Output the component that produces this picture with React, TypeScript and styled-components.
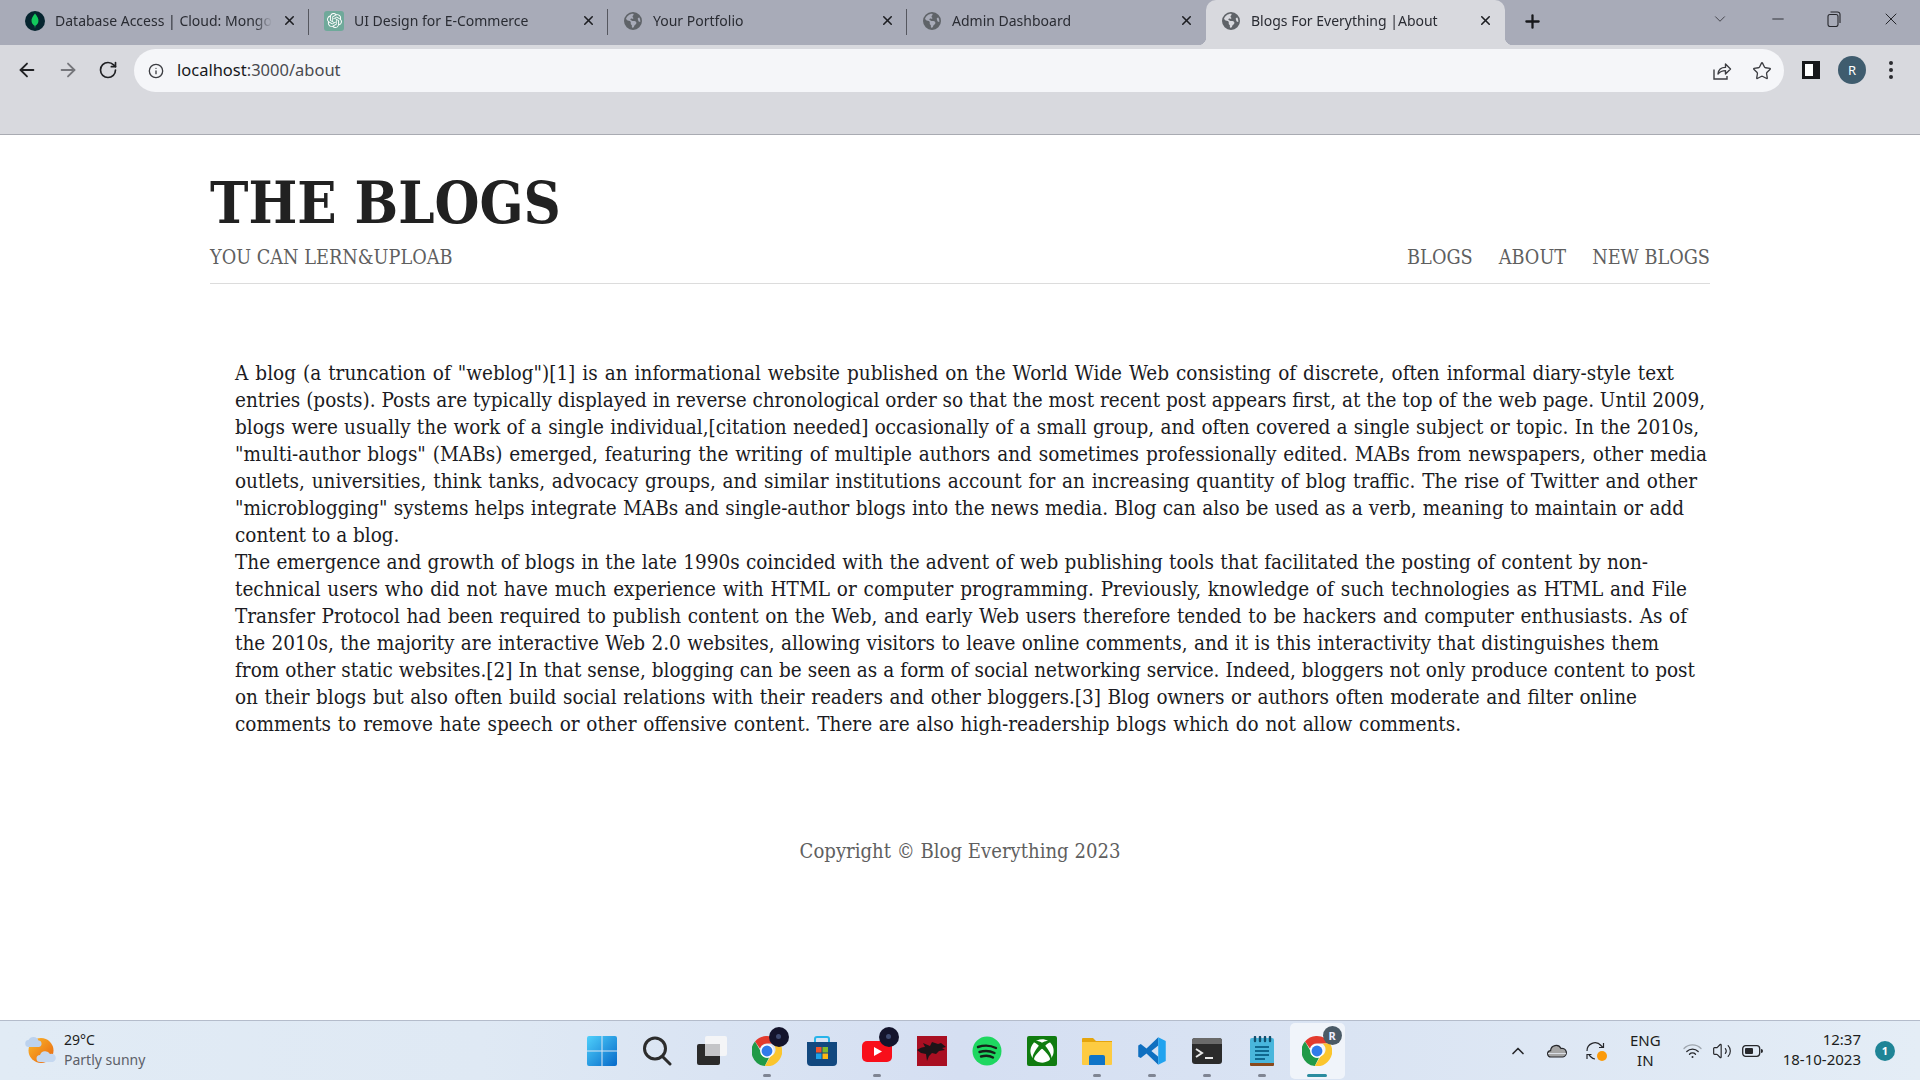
import React from 'react';
import styled, { createGlobalStyle } from 'styled-components';
import {
  ArrowLeft,
  ArrowRight,
  ChevronDown,
  ChevronUp,
  Info,
  Minus,
  Plus,
  RotateCw,
  Star,
  Volume2,
  X
} from 'lucide-react';
import { FaEarthAmericas, FaXbox } from 'react-icons/fa6';
import { SiOpenai } from 'react-icons/si';

const UI_FONT = '"Noto Sans", "Open Sans", sans-serif';
const PAGE_FONT = '"DejaVu Serif Condensed", "DejaVu Serif", serif';

const GlobalStyle = createGlobalStyle`
  html, body {
    margin: 0;
    height: 100%;
    overflow: hidden;
    background: #fff;
  }
`;

const Screen = styled.div`
  display: flex;
  flex-direction: column;
  height: 1080px;
  font-family: ${UI_FONT};
`;

/* Browser chrome */
const TabStrip = styled.div`
  display: flex;
  align-items: stretch;
  height: 45px;
  padding-left: 10px;
  background: #a8abb8;
`;

const Tab = styled.div<{ $active?: boolean; $divider?: boolean }>`
  position: relative;
  display: flex;
  align-items: center;
  gap: 10px;
  box-sizing: border-box;
  width: 299px;
  padding: 0 12px 4px 15px;
  border-radius: 10px 10px 0 0;
  background: ${(p) => (p.$active ? '#d8d9de' : 'transparent')};
  color: #2a2c33;
  font-size: 14px;
  &::after {
    content: '';
    display: ${(p) => (p.$divider ? 'block' : 'none')};
    position: absolute;
    right: 0;
    top: 9px;
    height: 26px;
    width: 1px;
    background: #55575f;
  }
`;

// Concave corners either side of the selected tab
const TabFlare = styled.span<{ $side: 'left' | 'right' }>`
  position: absolute;
  bottom: 0;
  ${(p) => p.$side}: -8px;
  width: 8px;
  height: 8px;
  background: radial-gradient(
    circle at ${(p) => (p.$side === 'left' ? '0 0' : '100% 0')},
    transparent 8px,
    #d8d9de 8.5px
  );
`;

const TabIcon = styled.span`
  display: flex;
  flex: none;
  align-items: center;
  justify-content: center;
  width: 20px;
  height: 20px;
  color: #5f6368;
`;

const OpenAiTile = styled.span`
  display: flex;
  align-items: center;
  justify-content: center;
  width: 20px;
  height: 20px;
  border-radius: 3px;
  background: #6fa99a;
  color: #fff;
`;

const TabTitle = styled.span`
  flex: 1;
  overflow: hidden;
  white-space: nowrap;
  -webkit-mask-image: linear-gradient(90deg, #000 92%, transparent);
  mask-image: linear-gradient(90deg, #000 92%, transparent);
`;

const TabClose = styled(X)`
  flex: none;
  color: #1d1e22;
`;

const NewTab = styled.div`
  display: flex;
  align-items: center;
  padding: 0 0 3px 17px;
  color: #17181b;
`;

const WindowButtons = styled.div`
  display: flex;
  align-items: center;
  gap: 40px;
  margin-left: auto;
  padding: 0 19px 7px 0;
  color: #25262b;
`;

const Toolbar = styled.div`
  display: flex;
  align-items: flex-start;
  box-sizing: border-box;
  height: 90px;
  padding-top: 4px;
  background: #d8d9de;
  border-bottom: 1px solid #a9abb2;
`;

const NavButtons = styled.div`
  display: flex;
  align-items: center;
  gap: 19px;
  height: 42px;
  padding: 0 16px 0 16px;
  color: #1f2023;
`;

const AddressBar = styled.div`
  display: flex;
  align-items: center;
  gap: 13px;
  box-sizing: border-box;
  width: 1650px;
  height: 43px;
  padding: 0 12px 0 14px;
  border-radius: 22px;
  background: #f5f6f9;
  color: #3c3d42;
`;

const Url = styled.span`
  flex: 1;
  padding-bottom: 2px;
  color: #4a4b50;
  font-size: 16.5px;
  b {
    color: #17181c;
    font-weight: 400;
  }
`;

const BarActions = styled.div`
  display: flex;
  align-items: center;
  gap: 20px;
`;

const ToolActions = styled.div`
  display: flex;
  align-items: center;
  height: 42px;
  padding-left: 18px;
  gap: 18px;
`;

const Avatar = styled.div`
  display: flex;
  align-items: center;
  justify-content: center;
  width: 28px;
  height: 28px;
  border-radius: 50%;
  background: #3f5c6e;
  color: #fff;
  font-size: 13px;
`;

const Dots = styled.div`
  display: flex;
  flex-direction: column;
  gap: 3px;
  margin-left: 5px;
  i {
    width: 4px;
    height: 4px;
    border-radius: 50%;
    background: #2b2c30;
  }
`;

/* Page */
const Page = styled.main`
  flex: 1;
  box-sizing: border-box;
  width: 1500px;
  margin: 0 auto;
  padding-top: 30px;
  font-family: ${PAGE_FONT};
  font-size: 20.5px;
  line-height: 27px;
`;

const Brand = styled.h1`
  margin: 0;
  color: #212121;
  font-size: 57.4px;
  font-weight: 700;
  line-height: 77px;
`;

const SubHeader = styled.div`
  display: flex;
  justify-content: space-between;
  padding: 2px 0 12px;
  border-bottom: 1px solid #dcdcdc;
  color: #5f5f5f;
  font-size: 19.7px;
`;

const SiteNav = styled.nav`
  display: flex;
  gap: 26px;
`;

const Article = styled.article`
  margin: 76px 0 0;
  padding: 0 25px;
  color: #1b1b22;
`;

const Line = styled.div<{ $width?: number }>`
  width: ${(p) => (p.$width ? `${p.$width}px` : 'auto')};
  white-space: nowrap;
  text-align-last: ${(p) => (p.$width ? 'justify' : 'left')};
`;

const Footer = styled.footer`
  margin-top: 100px;
  color: #5f5f5f;
  font-size: 20.1px;
  text-align: center;
`;

/* Taskbar */
const Taskbar = styled.footer`
  display: grid;
  grid-template-columns: 1fr auto 1fr;
  align-items: center;
  box-sizing: border-box;
  height: 60px;
  border-top: 1px solid #b4bccb;
  background: linear-gradient(90deg, #e1ebf5 0%, #dfe9f4 25%, #d5dff2 50%, #dae4f3 70%, #e4edf6 100%);
  color: #1c1d20;
  font-size: 14px;
`;

const Weather = styled.div`
  display: flex;
  align-items: center;
  gap: 8px;
  padding-left: 25px;
  line-height: 20px;
  small {
    display: block;
    color: #5c6068;
    font-size: 14px;
  }
`;

const WeatherText = styled.div`
  padding-bottom: 2px;
`;

const Dock = styled.div`
  display: flex;
  margin-left: -1px;
`;

const DockItem = styled.div<{ $active?: boolean; $mark?: 'open' | 'active' }>`
  position: relative;
  display: flex;
  align-items: center;
  justify-content: center;
  width: 55px;
  height: 56px;
  border-radius: 5px;
  background: ${(p) => (p.$active ? 'rgba(255,255,255,.6)' : 'transparent')};
  &::after {
    content: '';
    display: ${(p) => (p.$mark ? 'block' : 'none')};
    position: absolute;
    bottom: 2px;
    left: 50%;
    height: 3px;
    width: ${(p) => (p.$mark === 'active' ? '20px' : '8px')};
    margin-left: ${(p) => (p.$mark === 'active' ? '-10px' : '-4px')};
    border-radius: 2px;
    background: ${(p) => (p.$mark === 'active' ? '#2a8c9f' : '#7f8593')};
  }
`;

const DockBadge = styled.span<{ $letter?: boolean }>`
  position: absolute;
  top: ${(p) => (p.$letter ? '3px' : '4px')};
  right: ${(p) => (p.$letter ? '3px' : '6px')};
  display: flex;
  align-items: center;
  justify-content: center;
  width: ${(p) => (p.$letter ? '19px' : '20px')};
  height: ${(p) => (p.$letter ? '19px' : '20px')};
  border-radius: 50%;
  background: ${(p) => (p.$letter ? '#4a5a66' : '#14142c')};
  color: #eef;
  font-size: 11px;
  font-weight: 700;
  &::after {
    content: '';
    display: ${(p) => (p.$letter ? 'none' : 'block')};
    width: 5px;
    height: 5px;
    border-radius: 50%;
    background: #3e4a70;
  }
`;

const Tray = styled.div`
  display: flex;
  align-items: center;
  justify-content: flex-end;
  padding-right: 25px;
  font-size: 15px;
`;

const TrayIcons = styled.div`
  display: flex;
  align-items: center;
  gap: 19px;
  color: #26272b;
`;

const Lang = styled.div`
  margin: 0 22px;
  padding-bottom: 2px;
  line-height: 20px;
  text-align: center;
`;

const SystemIcons = styled.div`
  display: flex;
  align-items: center;
  gap: 10px;
  margin-right: 20px;
  color: #26272b;
`;

const Clock = styled.div`
  padding-bottom: 3px;
  line-height: 20px;
  text-align: right;
`;

const Notice = styled.span`
  display: flex;
  align-items: center;
  justify-content: center;
  width: 20px;
  height: 20px;
  margin-left: 14px;
  border-radius: 50%;
  background: #1f8496;
  color: #fff;
  font-size: 11px;
  font-weight: 700;
`;

/* Drawings */
const ChromeLogo = ({ size = 30 }: { size?: number }) => (
  <svg width={size} height={size} viewBox="1 1 22 22">
    <path d="M12 1a11 11 0 0 1 9.530 5.500H12a5.500 5.500 0 0 0-5.200 3.700L3.200 5A11 11 0 0 1 12 1z" fill="#e33b2e" />
    <path d="M3.200 5l4 7a5 5 0 0 0 6.300 4.800L10.400 23A11 11 0 0 1 3.200 5z" fill="#1f9a47" />
    <path d="M21.530 6.500A11 11 0 0 1 10.400 23l4.300-7.300a5 5 0 0 0 .9-9.200z" fill="#fbc52d" />
    <circle cx="12" cy="12" r="5" fill="#fff" />
    <circle cx="12" cy="12" r="4" fill="#2f7bea" />
  </svg>
);

const MongoLogo = () => (
  <svg width="20" height="20" viewBox="0 0 20 20">
    <circle cx="10" cy="10" r="10" fill="#06252f" />
    <path d="M10 2.500c2.600 3 3.800 5.400 3.400 8-.3 2-1.500 3.500-3 4.300L10 17.500l-.4-2.700c-1.500-.8-2.700-2.300-3-4.300-.4-2.600.8-5 3.400-8z" fill="#12c95c" />
  </svg>
);

const ShareIcon = () => (
  <svg width="20" height="20" viewBox="0 0 20 20" fill="none" stroke="currentColor" strokeWidth="1.400">
    <path d="M2 8.500V18h13v-3" />
    <path d="M6 13c.4-4 3-6.600 7.500-6.600V3l5 5-5 5V9.600C10 9.600 7.800 10.800 6 13z" strokeLinejoin="round" />
  </svg>
);

const PanelIcon = () => (
  <svg width="18" height="18" viewBox="0 0 18 18">
    <path d="M1 1h16v16H1z" fill="#fff" />
    <path d="M0 0h18v18H0zM3 3v12h8V3z" fillRule="evenodd" fill="#17181b" />
  </svg>
);

const RestoreIcon = () => (
  <svg width="14" height="16" viewBox="0 0 14 16" fill="none" stroke="currentColor" strokeWidth="1.100">
    <rect x="1" y="3.500" width="10" height="12" rx="2" />
    <path d="M3.500 1h7a2.500 2.500 0 0 1 2.500 2.500V12" />
  </svg>
);

const WeatherIcon = () => (
  <svg width="31" height="30" viewBox="0 0 31 30">
    <defs>
      <linearGradient id="sun" x1="0" y1="0" x2="1" y2="1">
        <stop offset="0" stopColor="#fbb92b" />
        <stop offset="1" stopColor="#e8640f" />
      </linearGradient>
    </defs>
    <circle cx="16" cy="14.500" r="12.500" fill="url(#sun)" />
    <path d="M4 11a3.500 3.500 0 0 1-.5-7 5.500 5.500 0 0 1 10 .5A3.300 3.300 0 0 1 14 11z" fill="#bcd2ee" />
    <path d="M15 26a3.500 3.500 0 0 1 0-7 5.500 5.500 0 0 1 10-1 4 4 0 0 1 3 8z" fill="#c5d8f0" />
  </svg>
);

const WindowsLogo = () => (
  <svg width="30" height="30" viewBox="0 0 30 30">
    <defs>
      <linearGradient id="win" x1="0" y1="0" x2="1" y2="1">
        <stop offset="0" stopColor="#4fd0fb" />
        <stop offset="1" stopColor="#0669c9" />
      </linearGradient>
    </defs>
    <path d="M2 0h12.500v14.500H0V2a2 2 0 0 1 2-2zM15.500 0H28a2 2 0 0 1 2 2v12.500H15.500zM0 15.500h14.500V30H2a2 2 0 0 1-2-2zM15.500 15.500H30V28a2 2 0 0 1-2 2H15.500z" fill="url(#win)" />
  </svg>
);

const SearchIcon = () => (
  <svg width="30" height="30" viewBox="0 0 30 30" fill="none" stroke="#2c2c2c" strokeWidth="3">
    <circle cx="13" cy="12.500" r="10.500" />
    <path d="M21 21l7 7" strokeLinecap="round" />
  </svg>
);

const TaskViewIcon = () => (
  <svg width="30" height="30" viewBox="0 0 30 30">
    <rect x="8" y="0" width="22" height="20" rx="2" fill="#f4f5f7" />
    <rect x="0" y="8" width="23" height="21" rx="2" fill="#2b2b2b" />
    <path d="M8 8h15v12H8z" fill="#c4c5c8" />
  </svg>
);

const StoreIcon = () => (
  <svg width="30" height="30" viewBox="0 0 30 30">
    <path d="M8 7V3a2 2 0 0 1 2-2h10a2 2 0 0 1 2 2v4" fill="none" stroke="#27b4ea" strokeWidth="2" />
    <path d="M0 6h30v20a4 4 0 0 1-4 4H4a4 4 0 0 1-4-4z" fill="#12487f" />
    <rect x="9" y="11" width="5.500" height="5.500" fill="#f1542c" />
    <rect x="15.500" y="11" width="5.500" height="5.500" fill="#7fba2a" />
    <rect x="9" y="17.500" width="5.500" height="5.500" fill="#1da3ea" />
    <rect x="15.500" y="17.500" width="5.500" height="5.500" fill="#fcb712" />
  </svg>
);

const YouTubeIcon = () => (
  <svg width="30" height="30" viewBox="0 0 30 30">
    <rect x="0" y="5" width="30" height="21" rx="5" fill="#f80f1a" />
    <path d="M12 11l8 4.500-8 4.500z" fill="#fff" />
  </svg>
);

const DragonIcon = () => (
  <svg width="30" height="30" viewBox="0 0 30 30">
    <rect width="30" height="30" fill="#a90f22" />
    <path d="M0 14c3-2 5-3 8-3l-2-4 7 3 2-4 6 2 3-1 5 4-4 1 3 2-6 1-3 3-4-1-3 3-2 5-1-7-5-1z" fill="#1d1418" />
  </svg>
);

const SpotifyIcon = () => (
  <svg width="30" height="30" viewBox="0 0 30 30">
    <circle cx="15" cy="15" r="14.500" fill="#1ed760" />
    <path d="M6 11c6-2 13-1.500 18 1M7.500 16c5-1.500 11-1 15 1M9 20.500c4-1 9-.8 12 1" fill="none" stroke="#16201a" strokeWidth="2.400" strokeLinecap="round" />
  </svg>
);

const XboxTile = styled.span`
  display: flex;
  align-items: center;
  justify-content: center;
  width: 30px;
  height: 30px;
  border-radius: 2px;
  background: #107c10;
  color: #fff;
`;

const FolderIcon = () => (
  <svg width="30" height="30" viewBox="0 0 30 30">
    <path d="M0 3a1 1 0 0 1 1-1h10l3 3h16v4H0z" fill="#e5a50d" />
    <path d="M0 6h30v22a1 1 0 0 1-1 1H1a1 1 0 0 1-1-1z" fill="#fdcb42" />
    <path d="M7 21a2 2 0 0 1 2-2h12a2 2 0 0 1 2 2v8H7z" fill="#0f74c7" />
  </svg>
);

const CodeIcon = () => (
  <svg width="30" height="30" viewBox="0 0 24 24">
    <path d="M17 1 7.600 10 3 6.400 1 7.500v9l2 1.100L7.600 14 17 23V16.500L11.500 12 17 7.500z" fill="#0f6fc0" />
    <path d="M17 1l6 3v16l-6 3z" fill="#21a3ef" />
  </svg>
);

const TerminalIcon = () => (
  <svg width="30" height="30" viewBox="0 0 30 30">
    <rect y="2" width="30" height="26" rx="3" fill="#2b2b2b" />
    <path d="M3 2h24a3 3 0 0 1 3 3v3H0V5a3 3 0 0 1 3-3z" fill="#6a6a6a" />
    <path d="M4 13l6 4-6 4" fill="none" stroke="#e8e8e8" strokeWidth="2" />
    <path d="M13 22h8" stroke="#e8e8e8" strokeWidth="2" />
  </svg>
);

const NotepadIcon = () => (
  <svg width="30" height="30" viewBox="0 0 30 30">
    <rect x="3" y="2" width="24" height="27" rx="2" fill="#49b6dc" />
    <path d="M3 27h24v2a1 1 0 0 1-1 1H4a1 1 0 0 1-1-1z" fill="#8a4a1c" />
    <path d="M8 11h14M8 15h14M8 19h14M8 23h10" stroke="#10688f" strokeWidth="2" />
    <path d="M8 1v4M13 1v4M18 1v4M23 1v4" stroke="#12506f" strokeWidth="2.400" strokeLinecap="round" />
  </svg>
);

const OneDriveIcon = () => (
  <svg width="20" height="14" viewBox="0 0 20 14">
    <path d="M4 13a3.200 3.200 0 0 1-.4-6.400A5.500 5.500 0 0 1 14 4.500 4.300 4.300 0 0 1 16 13z" fill="#a5a5a5" stroke="#26272b" strokeWidth="1.200" />
    <path d="M1 9.500h18" stroke="#e9eef6" strokeWidth=".8" />
  </svg>
);

const SyncIcon = () => (
  <svg width="22" height="22" viewBox="0 0 22 22" fill="none" stroke="#26272b" strokeWidth="1.200">
    <path d="M1 11a8 8 0 0 1 14-5.500l2 2" />
    <path d="M17.500 3v4.500H13" />
    <path d="M3 15l2 2a7 7 0 0 0 4 2" />
    <path d="M1 19v-4.500h4.500" />
    <circle cx="16" cy="16" r="5" fill="#fb9a0a" stroke="none" />
  </svg>
);

const WifiIcon = () => (
  <svg width="19" height="16" viewBox="0 0 19 16" fill="none" stroke="#26272b" strokeWidth="1.300" strokeLinecap="round">
    <path d="M1 5.500a12 12 0 0 1 17 0" opacity=".35" />
    <path d="M3.800 8.500a8 8 0 0 1 11.400 0" />
    <path d="M6.500 11.200a4.200 4.200 0 0 1 6 0" />
    <circle cx="9.500" cy="14" r="1" fill="#26272b" stroke="none" />
  </svg>
);

const BatteryIcon = () => (
  <svg width="21" height="12" viewBox="0 0 21 12" fill="none">
    <rect x=".7" y=".7" width="17" height="10.600" rx="3" stroke="#26272b" strokeWidth="1.300" />
    <rect x="3" y="3" width="8" height="6" rx="1" fill="#26272b" />
    <path d="M19 4v4a2 2 0 0 0 2-2 2 2 0 0 0-2-2z" fill="#26272b" />
  </svg>
);

const tabs = [
  { title: 'Database Access | Cloud: MongoDB', icon: <MongoLogo /> },
  {
    title: 'UI Design for E-Commerce',
    icon: (
      <OpenAiTile>
        <SiOpenai size={15} />
      </OpenAiTile>
    )
  },
  { title: 'Your Portfolio', icon: <FaEarthAmericas size={18} /> },
  { title: 'Admin Dashboard', icon: <FaEarthAmericas size={18} /> },
  { title: 'Blogs For Everything |About', icon: <FaEarthAmericas size={18} />, active: true }
];

// Each line is set to the measure it has in the design
const articleLines = [
  { width: 1439, text: 'A blog (a truncation of "weblog")[1] is an informational website published on the World Wide Web consisting of discrete, often informal diary-style text' },
  { width: 1470, text: 'entries (posts). Posts are typically displayed in reverse chronological order so that the most recent post appears first, at the top of the web page. Until 2009,' },
  { width: 1464, text: 'blogs were usually the work of a single individual,[citation needed] occasionally of a small group, and often covered a single subject or topic. In the 2010s,' },
  { width: 1472, text: '"multi-author blogs" (MABs) emerged, featuring the writing of multiple authors and sometimes professionally edited. MABs from newspapers, other media' },
  { width: 1462, text: 'outlets, universities, think tanks, advocacy groups, and similar institutions account for an increasing quantity of blog traffic. The rise of Twitter and other' },
  { width: 1449, text: '"microblogging" systems helps integrate MABs and single-author blogs into the news media. Blog can also be used as a verb, meaning to maintain or add' },
  { text: 'content to a blog.' },
  { width: 1413, text: 'The emergence and growth of blogs in the late 1990s coincided with the advent of web publishing tools that facilitated the posting of content by non-' },
  { width: 1452, text: 'technical users who did not have much experience with HTML or computer programming. Previously, knowledge of such technologies as HTML and File' },
  { width: 1452, text: 'Transfer Protocol had been required to publish content on the Web, and early Web users therefore tended to be hackers and computer enthusiasts. As of' },
  { width: 1424, text: 'the 2010s, the majority are interactive Web 2.0 websites, allowing visitors to leave online comments, and it is this interactivity that distinguishes them' },
  { width: 1460, text: 'from other static websites.[2] In that sense, blogging can be seen as a form of social networking service. Indeed, bloggers not only produce content to post' },
  { width: 1402, text: 'on their blogs but also often build social relations with their readers and other bloggers.[3] Blog owners or authors often moderate and filter online' },
  { width: 1226, text: 'comments to remove hate speech or other offensive content. There are also high-readership blogs which do not allow comments.' }
];

const App = (): JSX.Element => {
  return (
    <Screen>
      <GlobalStyle />

      <TabStrip>
        {tabs.map((tab, i) => (
          <Tab key={tab.title} $active={tab.active} $divider={i < 3 && !tab.active}>
            {tab.active && <TabFlare $side="left" />}
            <TabIcon>{tab.icon}</TabIcon>
            <TabTitle>{tab.title}</TabTitle>
            <TabClose size={15} strokeWidth={2.5} />
            {tab.active && <TabFlare $side="right" />}
          </Tab>
        ))}
        <NewTab>
          <Plus size={21} strokeWidth={2.6} />
        </NewTab>
        <WindowButtons>
          <ChevronDown size={18} strokeWidth={1} />
          <Minus size={18} strokeWidth={1.2} />
          <RestoreIcon />
          <X size={20} strokeWidth={1.2} />
        </WindowButtons>
      </TabStrip>

      <Toolbar>
        <NavButtons>
          <ArrowLeft size={22} />
          <ArrowRight size={22} color="#75767b" />
          <RotateCw size={20} />
        </NavButtons>
        <AddressBar>
          <Info size={16} />
          <Url>
            <b>localhost</b>:3000/about
          </Url>
          <BarActions>
            <ShareIcon />
            <Star size={20} strokeWidth={1.6} />
          </BarActions>
        </AddressBar>
        <ToolActions>
          <PanelIcon />
          <Avatar>R</Avatar>
          <Dots>
            <i />
            <i />
            <i />
          </Dots>
        </ToolActions>
      </Toolbar>

      <Page>
        <Brand>THE BLOGS</Brand>
        <SubHeader>
          <span>YOU CAN LERN&amp;UPLOAB</span>
          <SiteNav>
            <span>BLOGS</span>
            <span>ABOUT</span>
            <span>NEW BLOGS</span>
          </SiteNav>
        </SubHeader>

        <Article>
          {articleLines.map((line) => (
            <Line key={line.text} $width={line.width}>
              {line.text}
            </Line>
          ))}
        </Article>

        <Footer>Copyright © Blog Everything 2023</Footer>
      </Page>

      <Taskbar>
        <Weather>
          <WeatherIcon />
          <WeatherText>
            29°C
            <small>Partly sunny</small>
          </WeatherText>
        </Weather>

        <Dock>
          <DockItem><WindowsLogo /></DockItem>
          <DockItem><SearchIcon /></DockItem>
          <DockItem><TaskViewIcon /></DockItem>
          <DockItem $mark="open"><ChromeLogo /><DockBadge /></DockItem>
          <DockItem><StoreIcon /></DockItem>
          <DockItem $mark="open"><YouTubeIcon /><DockBadge /></DockItem>
          <DockItem><DragonIcon /></DockItem>
          <DockItem><SpotifyIcon /></DockItem>
          <DockItem><XboxTile><FaXbox size={24} /></XboxTile></DockItem>
          <DockItem $mark="open"><FolderIcon /></DockItem>
          <DockItem $mark="open"><CodeIcon /></DockItem>
          <DockItem $mark="open"><TerminalIcon /></DockItem>
          <DockItem $mark="open"><NotepadIcon /></DockItem>
          <DockItem $active $mark="active"><ChromeLogo /><DockBadge $letter>R</DockBadge></DockItem>
        </Dock>

        <Tray>
          <TrayIcons>
            <ChevronUp size={20} strokeWidth={2} />
            <OneDriveIcon />
            <SyncIcon />
          </TrayIcons>
          <Lang>
            ENG
            <br />
            IN
          </Lang>
          <SystemIcons>
            <WifiIcon />
            <Volume2 size={20} strokeWidth={1.4} />
            <BatteryIcon />
          </SystemIcons>
          <Clock>
            12:37
            <br />
            18-10-2023
          </Clock>
          <Notice>1</Notice>
        </Tray>
      </Taskbar>
    </Screen>
  );
};

export default App;
